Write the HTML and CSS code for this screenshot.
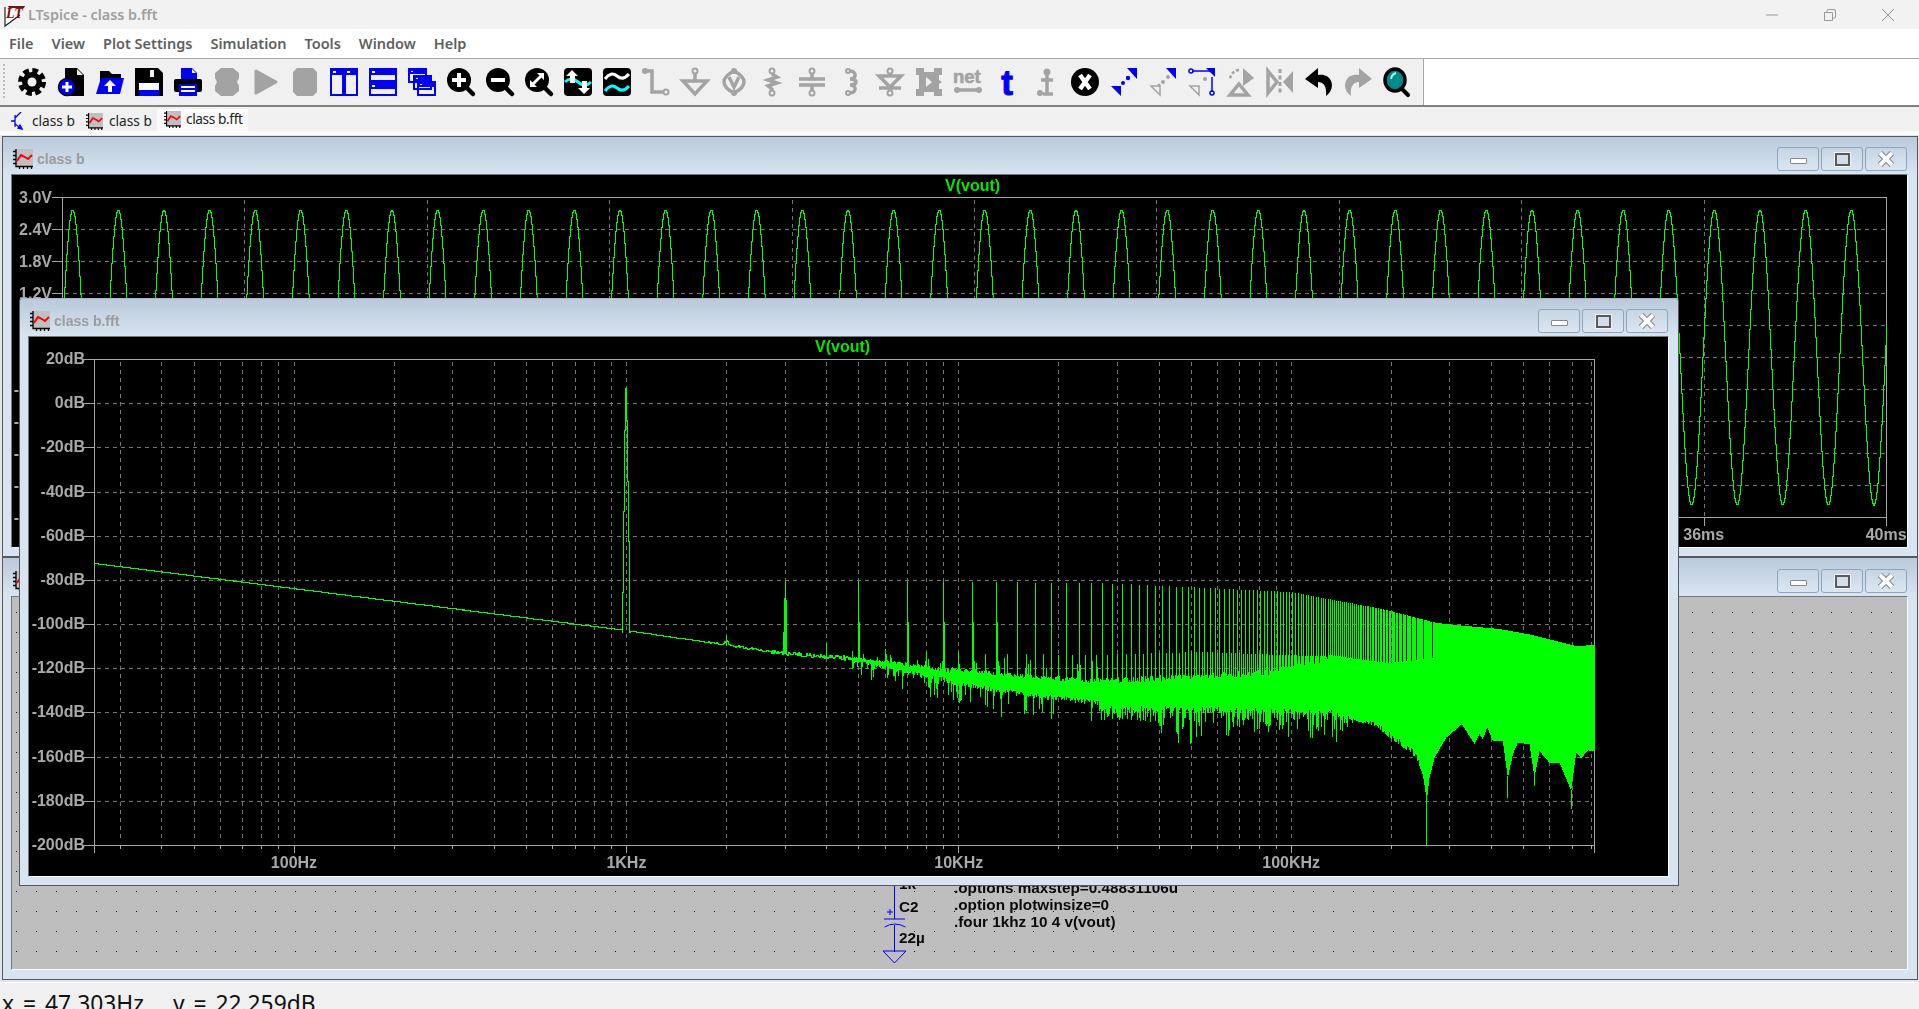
FILE: index.html
```html
<!DOCTYPE html>
<html lang="en">
<head>
<meta charset="utf-8">
<title>LTspice - class b.fft</title>
<link rel="stylesheet" href="styles.css">
</head>
<body>
<svg class="defs" width="0" height="0" aria-hidden="true">
  <symbol id="plot-ico" viewBox="0 0 20 20">
    <rect x="3" width="17" height="17" fill="#c0c0c0"/>
    <path d="M3 0v17.500h17M0 2.500h3M0 6.500h3M0 10.500h3M0 14.500h3M6.500 18v2M10.500 18v2M14.500 18v2M18.500 18v2" fill="none" stroke="#000" stroke-width="1.300"/>
    <path d="M4 12l4-6 4 2 3 2 4-4" fill="none" stroke="#f00" stroke-width="2"/>
  </symbol>
  <symbol id="x-ico" viewBox="0 0 18 18">
    <path d="M3 3l12 12M15 3L3 15" stroke="#777" stroke-width="6" fill="none"/>
    <path d="M3 3l12 12M15 3L3 15" stroke="#fff" stroke-width="4" fill="none"/>
  </symbol>
</svg>
<div class="app">
  <header class="titlebar">
    <svg class="logo" viewBox="0 0 24 26" width="24" height="26">
      <path d="M3 5v19l15-11" fill="#fff" stroke="#222" stroke-width="1.200"/>
      <path d="M6 4h17l-1 2H7z" fill="#7a1010"/>
      <text x="4" y="16" class="logo-t">LT</text>
    </svg>
    <span class="apptitle">LTspice - class b.fft</span>
    <div class="caption">
      <svg width="14" height="14" viewBox="0 0 14 14"><path d="M1 7h12" stroke="#999" fill="none"/></svg>
      <svg width="14" height="14" viewBox="0 0 14 14"><path d="M1.500 4.500h8v8h-8zM4 4.500V2.500q0-1 1-1h6q1.500 0 1.500 1.500v6q0 1-1 1h-2" stroke="#999" fill="none"/></svg>
      <svg width="14" height="14" viewBox="0 0 14 14"><path d="M1 1l12 12M13 1L1 13" stroke="#999" fill="none"/></svg>
    </div>
  </header>

  <nav class="menubar">
    <span>File</span><span>View</span><span>Plot Settings</span><span>Simulation</span><span>Tools</span><span>Window</span><span>Help</span>
  </nav>

  <div class="toolbar">
    <div class="tools">
      <div class="grip"></div>
      <div class="tool"><svg viewBox="0 0 28 28"><circle cx="14" cy="14" r="11.500" fill="none" stroke="#000" stroke-width="5" stroke-dasharray="5.600 3.430"/><circle cx="14" cy="14" r="10" fill="#000"/><circle cx="14" cy="14" r="4.500" fill="#f0f0f0"/></svg></div>
      <div class="tool"><svg viewBox="0 0 28 28"><path d="M8 0h12l7 7v21H8z" fill="#000"/><path d="M20 1l6 6h-6z" fill="#f0f0f0"/><circle cx="10" cy="19" r="8.500" fill="#00f" stroke="#000" stroke-width="1.500"/><path d="M10 14v10M5 19h10" stroke="#fff" stroke-width="3"/></svg></div>
      <div class="tool"><svg viewBox="0 0 28 28"><path d="M4 3h9l3 3h9v8H4z" fill="#000"/><path d="M5 10h23l-4 16H0z" fill="#00f"/><path d="M14 12l6 6h-4v6h-4v-6H8z" fill="#fff"/></svg></div>
      <div class="tool"><svg viewBox="0 0 28 28"><path d="M0 0h23l5 5v23H0z" fill="#000"/><rect x="15" y="2" width="4" height="7" fill="#f0f0f0"/><rect x="4" y="15" width="20" height="13" fill="#00f"/><rect x="4" y="15" width="20" height="7" fill="#fff"/></svg></div>
      <div class="tool"><svg viewBox="0 0 28 28"><path d="M7 0h11l5 5v8H7z" fill="#00f"/><path d="M18 1l4 4h-4z" fill="#f0f0f0"/><rect y="11" width="28" height="13" rx="2" fill="#000"/><rect x="5" y="16" width="18" height="12" fill="#00f"/><path d="M7 19h14M7 23h14" stroke="#fff" stroke-width="2"/></svg></div>
      <div class="tool"><svg viewBox="0 0 28 28"><path d="M8 0h12l6 5v5l-2 4 2 4v5l-6 5H8l-6-5v-5l2-4-2-4V5z" fill="#a3a3a3"/></svg></div>
      <div class="tool"><svg viewBox="0 0 28 28"><path d="M4 3l20 11L4 25z" fill="#a3a3a3" stroke="#a3a3a3" stroke-width="3" stroke-linejoin="round"/></svg></div>
      <div class="tool"><svg viewBox="0 0 28 28"><path d="M6 0h16l4 4v20l-4 4H6l-4-4V4z" fill="#a3a3a3"/></svg></div>
      <div class="tool"><svg viewBox="0 0 28 28"><path d="M1 1h12v26H1zM15 1h12v26H15z" fill="#f0f0f0" stroke="#00f" stroke-width="2"/><path d="M1 1h12v6H1zM15 1h12v6H15z" fill="#00f"/><path d="M3 3h3v2H3zM17 3h3v2h-3z" fill="#fff"/></svg></div>
      <div class="tool"><svg viewBox="0 0 28 28"><path d="M1 1h26v12H1zM1 15h26v12H1z" fill="#f0f0f0" stroke="#00f" stroke-width="2"/><path d="M1 1h26v6H1zM1 15h26v6H1z" fill="#00f"/><path d="M3 3h3v2H3zM3 17h3v2H3z" fill="#fff"/></svg></div>
      <div class="tool"><svg viewBox="0 0 28 28"><path d="M1 1h17v13H1zM6 8h17v13H6zM10 14h17v13H10z" fill="#f0f0f0" stroke="#00f" stroke-width="2"/><path d="M1 1h17v5H1zM6 8h17v5H6zM10 14h17v5H10z" fill="#00f"/><path d="M3 3h2v1H3zM8 10h2v1H8zM12 16h2v1h-2z" fill="#fff"/></svg></div>
      <div class="tool"><svg viewBox="0 0 28 28"><path d="M19 19l7 7" stroke="#000" stroke-width="4.500" stroke-linecap="round"/><circle cx="12" cy="12" r="12" fill="#000"/><path d="M12 5v14M5 12h14" stroke="#fff" stroke-width="4"/></svg></div>
      <div class="tool"><svg viewBox="0 0 28 28"><path d="M19 19l7 7" stroke="#000" stroke-width="4.500" stroke-linecap="round"/><circle cx="12" cy="12" r="12" fill="#000"/><path d="M5 12h14" stroke="#fff" stroke-width="4"/></svg></div>
      <div class="tool"><svg viewBox="0 0 28 28"><path d="M19 19l7 7" stroke="#000" stroke-width="4.500" stroke-linecap="round"/><circle cx="12" cy="12" r="12" fill="#000"/><path d="M8 16l8-8" stroke="#fff" stroke-width="3"/><path d="M12 5h7v7zM5 12v7h7z" fill="#fff"/></svg></div>
      <div class="tool"><svg viewBox="0 0 28 28"><rect width="28" height="28" rx="4" fill="#000"/><path d="M1 14q6-6 13 0t13 0" fill="none" stroke="#0ff" stroke-width="3"/><path d="M8 2l6 6h-3v7H6V8H2z" fill="#fff"/><path d="M20 26l6-6h-3v-7h-5v7h-4z" fill="#fff"/></svg></div>
      <div class="tool"><svg viewBox="0 0 28 28"><rect width="28" height="28" rx="4" fill="#000"/><path d="M2 11q6-8 12-3t12-2" fill="none" stroke="#fff" stroke-width="3"/><path d="M2 23q6-8 12-3t12-2" fill="none" stroke="#0ff" stroke-width="3"/></svg></div>
      <div class="tool gray"><svg viewBox="0 0 28 28"><path d="M3 3h7v21h12" class="ln"/><circle cx="3" cy="3" r="3"/><circle cx="24" cy="24" r="2.500" class="op"/></svg></div>
      <div class="tool gray"><svg viewBox="0 0 28 28"><circle cx="14" cy="3" r="2.500" class="op"/><path d="M14 6v7M2 13h24L14 26z" class="ln"/></svg></div>
      <div class="tool gray"><svg viewBox="0 0 28 28"><circle cx="14" cy="3" r="2" class="op"/><circle cx="14" cy="25" r="2" class="op"/><path d="M14 3C6 7 4 11 4 14s2 7 10 11c8-4 10-8 10-11s-2-7-10-11z" class="ln"/><path d="M9 9l5 10 5-10" class="ln"/></svg></div>
      <div class="tool gray"><svg viewBox="0 0 28 28"><circle cx="13" cy="3" r="2.500" class="op"/><circle cx="13" cy="25" r="2.500" class="op"/><path d="M13 6l5 3-9 3 9 3-9 3 5 4" class="ln"/></svg></div>
      <div class="tool gray"><svg viewBox="0 0 28 28"><circle cx="14" cy="3" r="2.500" class="op"/><circle cx="14" cy="25" r="2.500" class="op"/><path d="M14 6v4M1 11h26M1 17h26M14 18v4" class="ln"/></svg></div>
      <div class="tool gray"><svg viewBox="0 0 28 28"><circle cx="11" cy="3" r="2" class="op"/><circle cx="11" cy="25" r="2" class="op"/><path d="M12 3c8 0 8 8 1 8 8 0 8 6 0 6 7 0 7 8-1 8" class="ln"/></svg></div>
      <div class="tool gray"><svg viewBox="0 0 28 28"><circle cx="14" cy="3" r="2.500" class="op"/><circle cx="14" cy="25" r="2.500" class="op"/><path d="M14 6v2M3 8h22L14 19zM3 20h22M14 20v2" class="ln"/></svg></div>
      <div class="tool gray"><svg viewBox="0 0 28 28"><path d="M1 0h8v4h10V0h8v7h-3v5l3 2-3 2v5h3v7h-8v-4H9v4H1v-7h3V7H1z"/><path d="M11 9l6 5-6 5z" fill="#f0f0f0"/></svg></div>
      <div class="tool gray"><svg viewBox="0 0 28 28"><text x="-1" y="15" class="net-t">net</text><path d="M3 22h22" class="ln"/><circle cx="3" cy="22" r="3"/><circle cx="25" cy="22" r="3"/></svg></div>
      <div class="tool"><svg viewBox="0 0 28 28"><text x="14" y="27" class="t-t">t</text></svg></div>
      <div class="tool gray"><svg viewBox="0 0 28 28"><circle cx="15" cy="4" r="3.500"/><path d="M15 3v22M9 12h12M11 26h10" class="ln"/><circle cx="8" cy="25" r="3"/></svg></div>
      <div class="tool"><svg viewBox="0 0 28 28"><ellipse cx="14" cy="14" rx="14" ry="14" fill="#000"/><path d="M9 7l10 14M19 7L9 21" stroke="#fff" stroke-width="4.500"/></svg></div>
      <div class="tool"><svg viewBox="0 0 28 28"><path d="M27 0v11L17 0zM1 18h10v10z" fill="#00f"/><circle cx="18" cy="10" r="2.200" fill="#00f"/><circle cx="13" cy="15" r="2" fill="#00f"/></svg></div>
      <div class="tool"><svg viewBox="0 0 28 28"><path d="M27 0v11L17 0z" fill="#00f"/><path d="M2 18h9v9z" fill="none" stroke="#a3a3a3" stroke-width="1.500"/><circle cx="19" cy="9" r="2" fill="#a3a3a3"/><circle cx="14" cy="14" r="2" fill="#a3a3a3"/><circle cx="10" cy="17" r="1.500" fill="#a3a3a3"/></svg></div>
      <div class="tool"><svg viewBox="0 0 28 28"><path d="M4 3h18M24 9v15" stroke="#00f" stroke-width="1.500" fill="none"/><circle cx="3" cy="3" r="2" fill="none" stroke="#00f" stroke-width="1.500"/><circle cx="24" cy="25" r="2" fill="none" stroke="#00f" stroke-width="1.500"/><path d="M18 0h9v9z" fill="#00f"/><path d="M2 18h9v9z" fill="none" stroke="#a3a3a3" stroke-width="1.500"/><circle cx="17" cy="11" r="2" fill="#a3a3a3"/></svg></div>
      <div class="tool gray"><svg viewBox="0 0 28 28"><path d="M16 0l11 10-11 8z"/><path d="M12 2a10 10 0 0 0-9 10" fill="none" stroke="#a3a3a3" stroke-width="2.500" stroke-dasharray="3 2"/><path d="M12 16l9 11H3z" class="ln"/></svg></div>
      <div class="tool gray"><svg viewBox="0 0 28 28"><path d="M2 3l9 11-9 11z" class="ln"/><path d="M27 3l-10 11 10 11z"/><path d="M14 1v26" fill="none" stroke="#a3a3a3" stroke-width="3" stroke-dasharray="4 2.500"/></svg></div>
      <div class="tool"><svg viewBox="0 0 28 28"><path d="M13 0L0 11l13 9v-6c6 0 9 5 8 14 6-4 7-11 5-15-2-5-7-7-13-6z" fill="#000"/></svg></div>
      <div class="tool gray"><svg viewBox="0 0 28 28"><path d="M15 0l13 11-13 9v-6c-6 0-9 5-8 14-6-4-7-11-5-15 2-5 7-7 13-6z"/></svg></div>
      <div class="tool"><svg viewBox="0 0 28 28"><path d="M18 20l7 7" stroke="#000" stroke-width="4" stroke-linecap="round"/><ellipse cx="12" cy="12" rx="10" ry="11" fill="#008b8b" stroke="#000" stroke-width="3.500"/><path d="M8 11q1-5 5-6" stroke="#9ff" stroke-width="2" fill="none"/></svg></div>
    </div>
    <div class="toolfill"></div>
  </div>

  <div class="tabs">
    <div class="tab tab-sch">
      <svg viewBox="0 0 14 18" width="14" height="18"><path d="M2 9h4M6 3v12M12 0L6 6M6 12l7 5M13 17l-4-1 2-3z" fill="none" stroke="#00f" stroke-width="1.300"/></svg>
      <span>class b</span>
    </div>
    <div class="tab tab-plot"><svg class="tico"><use href="#plot-ico"/></svg><span>class b</span></div>
    <div class="tab active"><svg class="tico"><use href="#plot-ico"/></svg><span>class b.fft</span></div>
  </div>

  <main class="mdi">
    <section class="win win-wave">
      <div class="win-title">
        <svg class="wico"><use href="#plot-ico"/></svg><span class="wname">class b</span>
        <div class="wbtns">
          <button class="wb"><i class="g-min"></i></button><button class="wb"><i class="g-max"></i></button><button class="wb"><svg class="g-x"><use href="#x-ico"/></svg></button>
        </div>
      </div>
      <div class="win-body plot">
        <canvas id="wave" width="1895" height="372"></canvas>
        <div class="trace trace-wave">V(vout)</div>
        <div class="ylabels yl-wave"><b>3.0V</b><b>2.4V</b><b>1.8V</b><b>1.2V</b><b>0.6V</b><b>0.0V</b><b>-0.6V</b><b>-1.2V</b><b>-1.8V</b><b>-2.4V</b><b>-3.0V</b></div>
        <div class="xlabels xl-wave"><b>0ms</b><b>4ms</b><b>8ms</b><b>12ms</b><b>16ms</b><b>20ms</b><b>24ms</b><b>28ms</b><b>32ms</b><b>36ms</b><b>40ms</b></div>
      </div>
    </section>

    <section class="win win-sch">
      <div class="win-title">
        <svg class="wico"><use href="#plot-ico"/></svg><span class="wname">class b</span>
        <div class="wbtns">
          <button class="wb"><i class="g-min"></i></button><button class="wb"><i class="g-max"></i></button><button class="wb"><svg class="g-x"><use href="#x-ico"/></svg></button>
        </div>
      </div>
      <div class="win-body sch">
        <canvas id="dots" width="1895" height="372"></canvas>
        <svg class="cap" viewBox="0 0 26 80" width="26" height="80">
          <path d="M12.500 0v34M2 34h21M2.500 42q10-6 21 0M12.500 40v26M1 66h23L12.500 78z" fill="none" stroke="#00f" stroke-width="1"/>
          <path d="M5 27h6M8 24v6" stroke="#00f" stroke-width="1"/>
        </svg>
        <span class="lbl l-1k">1k</span>
        <span class="lbl l-c2">C2</span>
        <span class="lbl l-22">22µ</span>
        <div class="spice">
          <div>.options maxstep=0.48831106u</div>
          <div>.option plotwinsize=0</div>
          <div>.four 1khz 10 4 v(vout)</div>
        </div>
      </div>
    </section>

    <section class="win win-fft">
      <div class="win-title">
        <svg class="wico"><use href="#plot-ico"/></svg><span class="wname">class b.fft</span>
        <div class="wbtns">
          <button class="wb"><i class="g-min"></i></button><button class="wb"><i class="g-max"></i></button><button class="wb"><svg class="g-x"><use href="#x-ico"/></svg></button>
        </div>
      </div>
      <div class="win-body plot">
        <canvas id="fft" width="1639" height="539"></canvas>
        <div class="trace trace-fft">V(vout)</div>
        <div class="ylabels yl-fft"><b>20dB</b><b>0dB</b><b>-20dB</b><b>-40dB</b><b>-60dB</b><b>-80dB</b><b>-100dB</b><b>-120dB</b><b>-140dB</b><b>-160dB</b><b>-180dB</b><b>-200dB</b></div>
        <div class="xlabels xl-fft"><b>100Hz</b><b>1KHz</b><b>10KHz</b><b>100KHz</b></div>
      </div>
    </section>
  </main>

  <footer class="status"><span>x = 47.303Hz</span><span>y = 22.259dB</span></footer>
</div>
<script src="plots.js"></script>
</body>
</html>
```

FILE: styles.css
```css
* { box-sizing: border-box; }
html, body { margin: 0; height: 100%; overflow: hidden; }
body { font-family: "Noto Sans", "Liberation Sans", sans-serif; background: #f0f0f0; }
.defs { position: absolute; }
.app { width: 1919px; height: 1009px; display: flex; flex-direction: column; overflow: hidden; }

.titlebar { height: 29px; flex: none; display: flex; align-items: center; background: #f2f2f2; }
.logo { margin: 0 2px 0 2px; }
.logo-t { font: italic 700 14px "Liberation Serif", serif; fill: #7a1010; }
.apptitle { font-size: 14.350px; font-weight: 600; color: #a0a0a0; }
.caption { margin-left: auto; display: flex; gap: 44px; padding-right: 24px; align-items: center; }
.caption svg { display: block; }

.menubar { height: 30px; flex: none; display: flex; gap: 18px; align-items: center; padding: 0 0 1px 9px; background: #fff; border-bottom: 1px solid #a8a8a8; font-size: 14.500px; font-weight: 600; color: #5f5f5f; }

.toolbar { height: 48px; flex: none; display: flex; border-bottom: 2px solid #808080; }
.tools { width: 1424px; display: flex; align-items: center; background: #f0f0f0; border-right: 1px solid #a8a8a8; padding-left: 3px; }
.toolfill { flex: 1; background: #fff; }
.grip { width: 2px; height: 36px; margin-right: 7.500px; background-image: linear-gradient(#bdbdbd 50%, transparent 50%); background-size: 2px 4px; }
.tool { width: 39px; height: 28px; flex: none; display: flex; justify-content: center; }
.tool svg { width: 28px; height: 28px; display: block; overflow: visible; }
.gray svg { fill: #a3a3a3; }
.ln { fill: none; stroke: #a3a3a3; stroke-width: 3.500; }
.op { fill: none; stroke: #a3a3a3; stroke-width: 2; }
.net-t { font: 700 18.500px "Liberation Sans", sans-serif; fill: #a3a3a3; stroke: #a3a3a3; stroke-width: 0.600; }
.t-t { font: 700 35px "Liberation Sans", sans-serif; fill: #00f; stroke: #00f; stroke-width: 1; text-anchor: middle; }

.tabs { height: 28px; flex: none; display: flex; align-items: flex-start; padding: 4px 0 0 4px; background: #f0f0f0; border-bottom: 4px solid #fbfbfb; }
.tab { height: 20px; padding-bottom: 2px; display: flex; align-items: center; font-size: 13.700px; color: #222; }
.tab-sch { width: 74px; padding-left: 5px; gap: 9px; }
.tab-plot { width: 79px; padding-left: 8px; gap: 6px; }
.tab.active { width: 91px; height: 24px; margin-top: -2px; padding-bottom: 5px; background: #fbfbfb; padding-left: 7px; gap: 5px; letter-spacing: -0.400px; }
.tab svg { margin-top: 2px; }
.tico { width: 17px; height: 17px; flex: none; }

.mdi { position: relative; flex: 1; background: #e4e4e4; }
.win { position: absolute; display: flex; flex-direction: column; border: 1px solid #55585c; padding: 0 9px 8px 8px; background: linear-gradient(#b9cada, #d7e4f2 37px); }
.win-wave { left: 2px; top: 1px; width: 1916px; height: 421px; }
.win-sch { left: 2px; top: 422px; width: 1916px; height: 423px; padding-bottom: 9px; }
.win-fft { left: 19px; top: 163px; width: 1660px; height: 588px; border-top-color: #aab8c6; border-radius: 3px 3px 0 0; }

.win-title { height: 37px; flex: none; display: flex; align-items: flex-start; padding-top: 10px; }
.win-sch .win-title { height: 38px; padding-top: 11px; }
.wico { width: 20px; height: 20px; margin: 2px 4px 0 2px; flex: none; }
.wname { font: 700 14px/24px "Liberation Sans", sans-serif; color: #9c9c9c; }
.wbtns { margin-left: auto; margin-right: 1px; display: flex; gap: 2px; }
.wb { width: 42px; height: 24px; padding: 0; display: flex; align-items: center; justify-content: center; border: 1px solid #8fa5bb; border-radius: 3px; background: linear-gradient(#c6d5e4, #dbe6f2); }
.g-min { display: block; width: 17px; height: 6px; margin-top: 3px; background: #fff; border: 1px solid #888; border-radius: 1px; }
.g-max { display: block; width: 15px; height: 13px; border: 2px solid #5a5a5a; background: #d3deea; box-shadow: 0 0 0 1px #f4f4f4; }
.g-x { display: block; width: 18px; height: 18px; }

.win-body { position: relative; flex: 1; border: 1px solid; border-color: #777 #fff #fff #777; overflow: hidden; }
.plot { background: #000; font: 700 16px "Liberation Sans", sans-serif; color: #a9a9a9; }
canvas { display: block; }
.trace { position: absolute; color: #00e800; line-height: 18px; }
.trace-wave { left: 933px; top: 2px; }
.trace-fft { left: 786px; top: 1px; }

.ylabels { position: absolute; display: flex; flex-direction: column; justify-content: space-between; align-items: flex-end; }
.ylabels b { display: flex; align-items: center; height: 0; }
.yl-wave { left: 0; width: 40px; top: 23px; height: 320px; }
.yl-fft { left: 0; width: 56px; top: 22px; height: 486px; }
.xlabels { position: absolute; display: grid; text-align: center; line-height: 18px; }
.xl-wave { left: -41px; top: 351px; grid-template-columns: repeat(11, 182.400px); }
.xl-fft { left: 98.800px; top: 517px; grid-template-columns: repeat(4, 332.400px); }

.sch { background: #bebebe; }
.cap { position: absolute; left: 870px; top: 288px; overflow: visible; }
.lbl, .spice { position: absolute; font: 700 15.300px/17px "Liberation Sans", sans-serif; color: #0a0a0a; white-space: nowrap; }
.l-1k { left: 887px; top: 278px; }
.l-c2 { left: 887px; top: 301px; }
.l-22 { left: 887px; top: 332px; }
.spice { left: 942px; top: 282px; }

.status { height: 27px; flex: none; display: flex; gap: 29px; padding: 7px 0 0 2px; font-size: 22.800px; line-height: 27px; color: #111; background: #f0f0f0; border-top: 1px solid #fff; white-space: pre; word-spacing: 3px; overflow: hidden; }
```

FILE: plots.js
```js
(function () {
  var GRID = '#757575', AXIS = '#a6a6a6', GREEN = '#00ff00';

  function rng(seed) {
    return function () {
      seed |= 0; seed = seed + 0x6D2B79F5 | 0;
      var t = Math.imul(seed ^ seed >>> 15, 1 | seed);
      t = t + Math.imul(t ^ t >>> 7, 61 | t) ^ t;
      return ((t ^ t >>> 14) >>> 0) / 4294967296;
    };
  }
  function interp(p, x) {
    if (x <= p[0][0]) return p[0][1];
    for (var i = 1; i < p.length; i++) {
      if (x <= p[i][0]) {
        var a = p[i - 1], b = p[i];
        return a[1] + (b[1] - a[1]) * (x - a[0]) / (b[0] - a[0]);
      }
    }
    return p[p.length - 1][1];
  }
  function painter(id, ox, oy) {
    var c = document.getElementById(id).getContext('2d');
    return {
      rect: function (x, y, w, h, col) { c.fillStyle = col; c.fillRect(Math.round(x) - ox, Math.round(y) - oy, w, h); },
      col: function (x, a, b, col) {
        a = Math.round(a); b = Math.round(b);
        c.fillStyle = col; c.fillRect(Math.round(x) - ox, Math.min(a, b) - oy, 1, Math.abs(a - b) + 1);
      }
    };
  }
  function grid(p, b, xs, ys, tl, major) {
    var k;
    ys.forEach(function (y) {
      for (k = b.l + 3; k < b.r - 4; k += 8) p.rect(k, y, 4, 1, GRID);
      p.rect(b.l - 10, y, 11, 1, AXIS);
    });
    xs.forEach(function (x) {
      for (k = b.t + 3; k < b.b - 4; k += 8) p.rect(x, k, 1, 4, GRID);
      p.rect(x, b.b, 1, major(x) ? tl[1] : tl[0], AXIS);
    });
    p.rect(b.l - 10, b.t, b.r - b.l + 11, 1, AXIS);
    p.rect(b.l - 10, b.b, b.r - b.l + 11, 1, AXIS);
    p.rect(b.l, b.t, 1, b.b - b.t + 1, AXIS);
    p.rect(b.r, b.t, 1, b.b - b.t + 1, AXIS);
    p.rect(b.r, b.b, 1, tl[1], AXIS);
    p.rect(b.l, b.b, 1, tl[1], AXIS);
  }

  /* transient plot */
  (function () {
    var p = painter('wave', 12, 175), b = { l: 62, r: 1886, t: 197, b: 517 };
    var xs = [], ys = [], i;
    for (i = 1; i < 10; i++) { xs.push(Math.round(62 + i * 182.4)); }
    for (i = 1; i < 10; i++) { ys.push(197 + i * 32); }
    grid(p, b, xs, ys, [9, 9], function () { return true; });
    var per = 45.6;
    function y(x) { return 357 - 147.5 * Math.sin(2 * Math.PI * (x - 62 + 0.6) / per); }
    var prev = y(62);
    for (var x = 62; x <= 1886; x++) {
      var cur = y(x + 1);
      p.col(x, prev, cur, GREEN);
      prev = cur;
    }
  })();

  /* FFT plot */
  (function () {
    var p = painter('fft', 30, 337), b = { l: 95, r: 1595, t: 359, b: 845 };
    function xOf(f) { return 294.6 + 332.4 * Math.log10(f / 100); }
    var xs = [], majors = {}, ys = [], i, d, m;
    for (d = 10; d <= 100000; d *= 10) {
      for (m = 1; m < 10; m++) {
        var xx = Math.round(xOf(d * m));
        if (xx > b.l && xx < b.r) {
          xs.push(xx);
          if (m === 1) majors[xx] = 1;
        }
      }
    }
    for (i = 1; i < 11; i++) { ys.push(Math.round(359 + i * 44.18)); }
    grid(p, b, xs, ys, [4, 8], function (x) { return majors[x]; });

    var r = rng(7421);
    var C = [[95, 563], [626, 630], [785, 653], [850, 658], [950, 675], [1017, 684], [1083, 690], [1100, 692], [1300, 688], [1595, 680]];
    var J = [[95, 0], [690, 0.2], [720, 1], [850, 2.4]];
    var W = [[850, 1.5], [900, 5], [950, 8], [1017, 11], [1083, 13], [1100, 14], [1291, 20], [1595, 20]];
    var E1 = [[640, 580], [1100, 583], [1291, 592], [1383, 609], [1437, 623], [1467, 626], [1500, 629], [1533, 635], [1577, 646], [1595, 645]];
    var E2 = [[727, 636], [826, 643], [885, 649], [927, 652], [1000, 654], [1100, 655], [1200, 652], [1340, 657]];
    var Z = [[0,490],[60,480],[100,490],[170,510],[218,540],[255,585],[275,575],[300,530],[400,530],[500,510],[560,545],[600,530],[640,535],[665,600],[680,605],[700,560],[730,510],[770,480],[830,495],[870,530],[900,550],[950,590],[970,640],[982,720],[990,650],[1005,590],[1040,530],[1087,490],[1125,548],[1140,520],[1150,535],[1163,498],[1180,540],[1210,540],[1225,650],[1240,580],[1255,545],[1290,550],[1305,650],[1320,570],[1350,605],[1380,605],[1405,665],[1415,690],[1430,575],[1445,592],[1465,568],[1484,570]]
      .map(function (q) { return [1100 + q[0] / 3, 560 + q[1] / 3]; });
    var LB = [[1100, 707], [1267, 710], [1333, 712], [1357, 720]];
    var T = [[1100, 678], [1267, 670], [1330, 655], [1357, 659], [1390, 663], [1436, 658]];

    var x, prev = interp(C, 95), y;
    for (x = 95; x < 850; x++) {
      if (x >= 623 && x <= 630) { prev = 632; continue; }
      y = interp(C, x) + (r() - 0.5) * 2 * interp(J, x);
      if (x > 720 && x < 735) y -= Math.max(0, 4 - Math.abs(x - 727));
      p.col(x, prev, y, GREEN);
      prev = y;
    }
    var pk = [[623, 632, 592], [624, 592, 511], [625, 511, 430], [626, 430, 388], [627, 388, 420], [628, 420, 481], [629, 481, 541], [630, 541, 632]];
    pk.forEach(function (q) { p.col(q[0], q[1], q[2], GREEN); });

    for (x = 850; x < 1100; x++) {
      var c = interp(C, x), w = interp(W, x);
      var dens = x > 950 ? 0.55 : 0.25;
      var up = c - w * (dens + (1 - dens) * r()), dn = c + w * (dens + (1 - dens) * r());
      if (r() < 0.10) up -= 4 + r() * w * 1.2;
      if (r() < 0.18) dn += 4 + r() * (w * 1.6 + 6);
      p.col(x, prev, (up + dn) / 2, GREEN);
      p.col(x, up, dn, GREEN);
      prev = (up + dn) / 2;
    }
    for (x = 1100; x <= 1595; x++) {
      var top, bot, L = interp(Z, x);
      if (x < 1437) {
        top = interp(T, x) + (x < 1330 ? r() * 6 : 0);
      } else {
        top = interp(E1, x);
      }
      if (x < 1357) {
        bot = interp(LB, x) + (r() - 0.5) * 6;
        if (r() < 0.6) bot += r() * Math.max(0, L - bot);
      } else if (x < 1420) {
        bot = L - (r() < 0.5 ? 6 * r() : 0);
      } else {
        bot = L;
      }
      p.col(x, top, bot, GREEN);
    }
    [[1427, 845], [1508.3, 796.7], [1535, 785], [1571.6, 808]].forEach(function (q) {
      p.col(q[0], interp(Z, q[0]), q[1], GREEN);
    });

    var k, xk;
    for (k = 2; k * 1000 < 300000; k++) {
      xk = xOf(k * 1000);
      if (k % 2) {
        p.col(xk, interp(E1, xk), interp(C, xk), GREEN);
        if (xk < 1010) p.col(xk + 1, xk < 800 ? 600 : 622, interp(C, xk), GREEN);
        if (xk < 800) {
          p.col(xk - 1, 598, interp(C, xk), GREEN);
          p.col(xk - 2, 632, interp(C, xk), GREEN);
        }
      } else if (xk < 1340) {
        p.col(xk, interp(E2, xk), interp(C, xk), GREEN);
      }
    }
  })();

  /* schematic grid */
  (function () {
    var p = painter('dots', 12, 597);
    for (var yy = 612; yy < 968; yy += 19.95) {
      for (var xx = 16; xx < 1907; xx += 19.95) p.rect(xx, yy, 1, 1, '#000');
    }
  })();
})();
```
